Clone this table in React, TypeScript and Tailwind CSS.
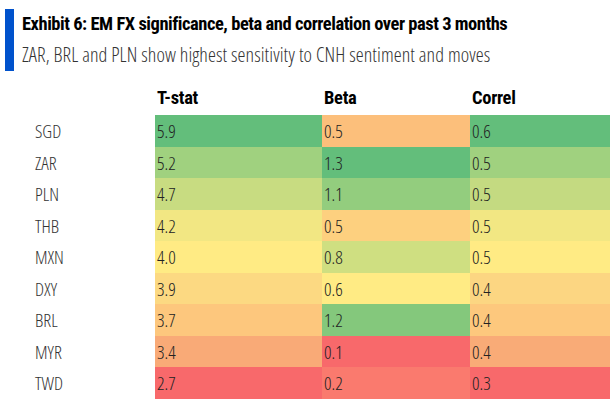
const rows = [
  { name: 'SGD', t: ['5.9', '#63be7b'], b: ['0.5', '#fcbf7b'], c: ['0.6', '#63be7b'] },
  { name: 'ZAR', t: ['5.2', '#a0d17f'], b: ['1.3', '#63be7b'], c: ['0.5', '#a0d17f'] },
  { name: 'PLN', t: ['4.7', '#c8dc81'], b: ['1.1', '#93cd7e'], c: ['0.5', '#c4da81'] },
  { name: 'THB', t: ['4.2', '#f2e783'], b: ['0.5', '#fdd07f'], c: ['0.5', '#f2e783'] },
  { name: 'MXN', t: ['4.0', '#ffeb84'], b: ['0.8', '#cfdf81'], c: ['0.5', '#ffeb84'] },
  { name: 'DXY', t: ['3.9', '#fcd982'], b: ['0.6', '#ffeb84'], c: ['0.4', '#fcd682'] },
  { name: 'BRL', t: ['3.7', '#fdc77d'], b: ['1.2', '#84c87c'], c: ['0.4', '#fdc87d'] },
  { name: 'MYR', t: ['3.4', '#f9aa77'], b: ['0.1', '#f8696b'], c: ['0.4', '#f9ab77'] },
  { name: 'TWD', t: ['2.7', '#f8696b'], b: ['0.2', '#fa7a6e'], c: ['0.3', '#f8696b'] },
];

export default function App() {
  return (
    <div className="h-[410px] w-[613px] overflow-hidden bg-white font-['Roboto',sans-serif] text-[#222]">
      <div className="flex pl-[5px] pt-[9px]">
        <div className="h-[62px] w-[9px] shrink-0 bg-[#0052cc]" />
        <div className="ml-[8px] min-w-0 whitespace-nowrap">
          <h1 className="mt-[3px] text-[18.5px] leading-[24px] font-bold tracking-[-0.47px] text-black [font-stretch:75%]">
            Exhibit 6: EM FX significance, beta and correlation over past 3 months
          </h1>
          <p className="mt-[6px] font-['Open_Sans',sans-serif] text-[20px] leading-[26px] font-light tracking-[0.1px] text-[#333] [font-stretch:75%]">
            ZAR, BRL and PLN show highest sensitivity to CNH sentiment and moves
          </p>
        </div>
      </div>

      <div className="mt-[13px] grid grid-cols-[155px_167px_148px_140px]">
        <div className="h-[31px]" />
        <div className="h-[31px] pl-[2px] text-[18.5px] leading-[28px] font-bold tracking-[-0.3px] text-black [font-stretch:75%]">T-stat</div>
        <div className="h-[31px] pl-[2px] text-[18.5px] leading-[28px] font-bold tracking-[-0.3px] text-black [font-stretch:75%]">Beta</div>
        <div className="h-[31px] pl-[2px] text-[18.5px] leading-[28px] font-bold tracking-[-0.3px] text-black [font-stretch:75%]">Correl</div>

        {rows.map((row, i) => {
          const h = i % 2 === 0 ? 'h-[32px]' : 'h-[31px]';
          return [
            <div
              key={row.name}
              className={`${h} pl-[35px] font-['Open_Sans',sans-serif] text-[18.5px] leading-[31px] font-light text-[#333] [font-stretch:75%]`}
            >
              {row.name}
            </div>,
            ...[row.t, row.b, row.c].map(([v, bg], j) => (
              <div
                key={row.name + j}
                className={`${h} pl-[2px] font-['Open_Sans',sans-serif] text-[18.5px] leading-[31px] font-light text-[#222] [font-stretch:75%]`}
                style={{ backgroundColor: bg }}
              >
                {v}
              </div>
            )),
          ];
        })}
      </div>
    </div>
  );
}
